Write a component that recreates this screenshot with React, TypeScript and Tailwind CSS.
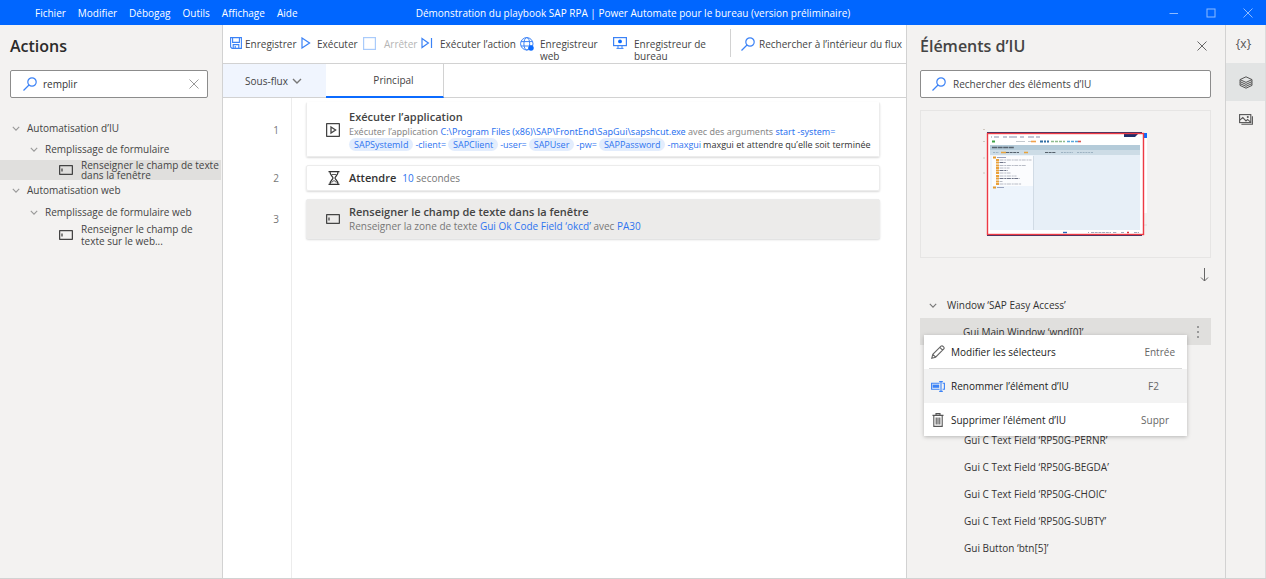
import { useState } from 'react';
import type { ReactNode } from 'react';

const menus = ['Fichier', 'Modifier', 'Débogag', 'Outils', 'Affichage', 'Aide'];

const textFields = [
  'Gui C Text Field ‘RP50G-PERNR’',
  'Gui C Text Field ‘RP50G-BEGDA’',
  'Gui C Text Field ‘RP50G-CHOIC’',
  'Gui C Text Field ‘RP50G-SUBTY’',
  'Gui Button ‘btn[5]’',
];

type IconProps = { className?: string };

function SearchIcon({ className = '' }: IconProps) {
  return (
    <svg viewBox="0 0 14 14" className={`h-3.5 w-3.5 shrink-0 ${className}`} fill="none" stroke="#3b82f6" strokeWidth="1.2">
      <circle cx="9" cy="5" r="4.2" />
      <path d="M6 8 L0.5 13.5" />
    </svg>
  );
}

function ChevronIcon({ className = '' }: IconProps) {
  return (
    <svg viewBox="0 0 10 6" className={`shrink-0 ${className}`} fill="none" stroke="currentColor" strokeWidth="1.4">
      <path d="M1 1 L5 5 L9 1" />
    </svg>
  );
}

function CloseIcon({ className = '' }: IconProps) {
  return (
    <svg viewBox="0 0 10 10" className={`h-2.5 w-2.5 shrink-0 ${className}`} fill="none" stroke="currentColor" strokeWidth="1">
      <path d="M0.5 0.5 L9.5 9.5 M9.5 0.5 L0.5 9.5" />
    </svg>
  );
}

function FieldIcon({ className = '' }: IconProps) {
  return (
    <svg viewBox="0 0 14 10" className={`h-2.5 w-3.5 shrink-0 ${className}`} fill="none" stroke="#444" strokeWidth="1.3">
      <rect x="0.6" y="0.6" width="12.8" height="8.8" rx="0.5" />
      <path d="M3 3.5 V6.5" />
    </svg>
  );
}

function SaveIcon() {
  return (
    <svg viewBox="0 0 12 12" className="h-3 w-3 shrink-0" fill="none" stroke="#3b82f6" strokeWidth="1.1">
      <path d="M0.6 0.6 H11.4 V11.4 H2 L0.6 10 Z M2.6 0.6 V5.4 H9.4 V0.6 M3.2 11.4 V7.6 H8.8 V11.4 M5.2 9 V11.4" />
    </svg>
  );
}

function PlayIcon() {
  return (
    <svg viewBox="0 0 10 12" className="h-3 w-2.5 shrink-0" fill="none" stroke="#3b82f6" strokeWidth="1.2">
      <path d="M1 1 L8.6 6 L1 11 Z" />
    </svg>
  );
}

function StopIcon() {
  return (
    <svg viewBox="0 0 13 13" className="h-[13px] w-[13px] shrink-0" fill="none" stroke="#a9cbfb" strokeWidth="1.2">
      <rect x="0.6" y="0.6" width="11.8" height="11.8" />
    </svg>
  );
}

function StepIcon() {
  return (
    <svg viewBox="0 0 12 12" className="h-3 w-3 shrink-0" fill="none" stroke="#3b82f6" strokeWidth="1.2">
      <path d="M1 1.5 L7.4 6 L1 10.5 Z M10.5 1 V11" />
    </svg>
  );
}

function GlobeIcon() {
  return (
    <svg viewBox="0 0 14 14" className="h-3.5 w-3.5 shrink-0" fill="none" stroke="#3b82f6">
      <circle cx="6.8" cy="6.8" r="6.2" />
      <ellipse cx="6.8" cy="6.8" rx="2.9" ry="6.2" />
      <path d="M1 4.6 H12.6 M1 9 H12.6" />
      <circle cx="11" cy="11" r="2.5" fill="#0b6bff" stroke="#0b6bff" strokeWidth="0.5" />
    </svg>
  );
}

function MonitorIcon() {
  return (
    <svg viewBox="0 0 14 12" className="h-3 w-3.5 shrink-0" fill="none" stroke="#3b82f6">
      <rect x="0.6" y="0.6" width="12.8" height="8" strokeWidth="1.2" />
      <circle cx="7" cy="4.4" r="1.9" fill="#0b6bff" stroke="none" />
      <path d="M5 9 V11 M9 9 V11 M3.5 11.4 H10.5" />
    </svg>
  );
}

function RunAppIcon() {
  return (
    <svg viewBox="0 0 14 14" className="h-3.5 w-3.5" fill="none" stroke="#444" strokeWidth="1.3">
      <rect x="0.6" y="0.6" width="12.8" height="12.8" rx="0.5" />
      <path d="M5 4 L9.6 7 L5 10 Z" />
    </svg>
  );
}

function HourglassIcon() {
  return (
    <svg viewBox="0 0 12 14" className="h-3.5 w-3" fill="none" stroke="#333" strokeWidth="1.2">
      <path d="M0.5 0.7 H11.5 M0.5 13.3 H11.5 M2 1 C2 4.5 5 5.5 5 7 C5 8.5 2 9.5 2 13 M10 1 C10 4.5 7 5.5 7 7 C7 8.5 10 9.5 10 13" />
      <path d="M3.5 3.5 H8.5 M3.5 11.5 L6 9.5 L8.5 11.5" strokeWidth="0.8" />
    </svg>
  );
}

function LayersIcon() {
  return (
    <svg viewBox="0 0 14 13" className="h-[13px] w-3.5" fill="none" stroke="#555" strokeWidth="1">
      <path d="M7 0.8 L13 3.6 L7 6.4 L1 3.6 Z" />
      <path d="M1 3.6 V5.6 L7 8.4 L13 5.6 V3.6 M1 5.6 V7.6 L7 10.3 L13 7.6 V5.6 M1 7.6 V9.4 L7 12.2 L13 9.4 V7.6" />
    </svg>
  );
}

function ImagesIcon() {
  return (
    <svg viewBox="0 0 14 11" className="h-[11px] w-3.5" fill="none" stroke="#555" strokeWidth="1.1">
      <rect x="0.6" y="0.6" width="11.2" height="8" />
      <path d="M2.4 10.3 H13.4 V2.2 M0.8 6.2 L3.8 3.6 L7 7 L8.6 5.4 L11.6 8.2" />
      <circle cx="8.8" cy="3" r="0.5" />
    </svg>
  );
}

function PencilIcon() {
  return (
    <svg viewBox="0 0 14 14" className="h-3.5 w-3.5" fill="none" stroke="#666" strokeWidth="1.1">
      <path d="M0.8 13.2 L1.8 9.4 L10 1.2 C11.4 0 14 2.4 12.8 4 L4.6 12.2 Z M1.8 9.4 L4.6 12.2 M8.8 2.4 L11.6 5.2" />
    </svg>
  );
}

function RenameIcon() {
  return (
    <svg viewBox="0 0 14 11" className="h-[11px] w-3.5" fill="none" stroke="#3b82f6" strokeWidth="1.1">
      <path d="M8.6 2.2 H0.6 V8.2 H8.6 M11.6 2.2 H13.4 V8.2 H11.6 M10 1 V9.8 M8.2 0.6 H11.8 M8.2 10.4 H11.8" />
      <rect x="1.6" y="3.6" width="6.6" height="3.2" fill="#3b82f6" stroke="none" />
    </svg>
  );
}

function TrashIcon() {
  return (
    <svg viewBox="0 0 12 14" className="h-3.5 w-3" fill="none" stroke="#555" strokeWidth="1.1">
      <path d="M0.5 2.4 H11.5 M4 2.2 V0.6 H8 V2.2 M1.8 2.6 V13.4 H10.2 V2.6 M4.2 4.6 V11.4 M6 4.6 V11.4 M7.8 4.6 V11.4" />
    </svg>
  );
}

// Captured SAP window shown in the preview box
function SapThumbnail() {
  const rows = [23.5, 26, 29, 31.5, 34, 36.5, 39.5, 42, 45, 47.5];
  const widths = [32, 6, 27, 10, 8, 11, 17, 20, 3, 22];
  return (
    <svg viewBox="0 0 166 112" className="h-28 w-[166px]" role="img" aria-label="SAP Easy Access">
      <path d="M1 2.5 h2 M1 14.5 h2 M1 31 h2 M1 46 h2" stroke="#cfc8c0" strokeWidth="1" />
      <rect x="161" y="6" width="4" height="80" fill="#fff" />
      <rect x="161" y="6" width="4" height="5" fill="#0b6bff" />
      <path d="M161 98 h4" stroke="#dcdcdc" />
      <rect x="5.5" y="6" width="155" height="102" fill="#fff" />
      <path d="M5 5.5 H160 M5 108.5 H160" stroke="#2b3467" strokeWidth="1.2" />
      <path d="M142 6 H157 L153 10 H142 Z" fill="#1f2f6b" />
      <path d="M9 10 h1 m2 0 h5 m4 0 h4 m2 0 h8 m3 0 h4 m4 0 h6 m2 0 h4" stroke="#8a90ad" strokeWidth="1.2" />
      <path d="M10 14.5 h3" stroke="#3fa447" strokeWidth="2" />
      <path d="M34 14.5 h9 m3 0 h3" stroke="#c3c9cf" strokeWidth="1.2" />
      <path d="M49 14.5 h5" stroke="#f1a24b" strokeWidth="1.6" />
      <path d="M58 14.5 h3 m1 0 h2 m1 0 h2" stroke="#2f6fa5" strokeWidth="1.8" />
      <path d="M69 14.5 h3 m1 0 h3 m1 0 h3 m1 0 h2" stroke="#8dbb8d" strokeWidth="1.6" />
      <path d="M85 14.5 h3 m1 0 h3 m1 0 h3" stroke="#58a7da" strokeWidth="1.6" />
      <path d="M96 14.5 h3" stroke="#d9534f" strokeWidth="1.6" />
      <rect x="8" y="18" width="150" height="5" fill="#b4cbd9" />
      <path d="M10 20.5 H32" stroke="#56616c" strokeWidth="1.6" strokeDasharray="5 0.6" />
      <rect x="8" y="23" width="150" height="5" fill="#cddce6" />
      <path d="M11 25.5 h6 m62 0 h12 m4 0 h16" stroke="#9db2c2" strokeWidth="1.2" strokeDasharray="2 0.8" />
      <path d="M19 25.5 h5 m18 0 h4" stroke="#e8a33d" strokeWidth="1.6" />
      <path d="M24 25.5 h13 m26 0 h11" stroke="#56616c" strokeWidth="1.2" strokeDasharray="3 0.6" />
      <rect x="8" y="28" width="150" height="75" fill="#e7eff7" />
      <rect x="8" y="28" width="43" height="75" fill="#edf4fc" />
      <rect x="10" y="29" width="41" height="30" fill="#fbfcfe" />
      <path d="M51.5 29 V103" stroke="#ccd6e0" strokeWidth="0.8" />
      <path d="M11 30.5 h3 M11 60.5 h3" stroke="#e59a2d" strokeWidth="2" />
      <path d="M15 30.5 h9 M15 60.5 h7" stroke="#9aa2bd" strokeWidth="1.2" />
      {rows.map((y, i) => (
        <g key={y}>
          <rect x="14" y={y + 8.5} width="3" height="2" fill="#eaa13b" />
          <path
            d={`M17.5 ${y + 9.5} h${widths[i]}`}
            stroke={i % 3 === 1 ? '#5c6378' : '#b0b4bf'}
            strokeWidth="0.9"
            strokeDasharray="4 0.8 2 0.6"
          />
        </g>
      ))}
      <path d="M81 105.5 h4" stroke="#2a68b8" strokeWidth="1.4" />
      <path d="M106 105.5 h1 m2 0 h20 m2 0 h4 m4 0 h3 m10 0 h5" stroke="#a3a8ba" strokeWidth="1" strokeDasharray="3 0.7" />
      <path d="M145 105.5 h2" stroke="#d9363e" strokeWidth="1.4" />
      <rect x="5.5" y="6.5" width="156" height="101" fill="none" stroke="#ee3a44" strokeWidth="1.4" />
    </svg>
  );
}

function ToolButton({ icon, label, className, disabled }: { icon: ReactNode; label: string; className: string; disabled?: boolean }) {
  return (
    <button
      disabled={disabled}
      className={`flex shrink-0 items-start text-left leading-3 text-[#444] disabled:text-[#b5b5b5] ${className}`}
    >
      {icon}
      <span className="pt-px">{label}</span>
    </button>
  );
}

function Variable({ children }: { children: string }) {
  return <span className="rounded-full bg-[#e3edfd] px-[5px]">{children}</span>;
}

function Step({ number, icon, className, children }: { number: number; icon: ReactNode; className: string; children: ReactNode }) {
  return (
    <li className="flex">
      <div className="flex w-[69px] shrink-0 items-center justify-end border-r border-[#ececec] pr-3 text-[#777]">{number}</div>
      <div className="min-w-0 flex-1 py-1 pr-[26px] pl-3.5">
        <div className={`flex items-center rounded-xs border border-[#ececec] shadow-[0_1px_2px_#00000026] ${className}`}>
          <span className="flex w-[42px] shrink-0 justify-end pr-[9px]">{icon}</span>
          <div className="min-w-0 flex-1">{children}</div>
        </div>
      </div>
    </li>
  );
}

function ActionsPanel() {
  const [query, setQuery] = useState('remplir');

  return (
    <aside className="w-[223px] shrink-0 border-r border-[#d2d2d2] bg-[#f3f2f1]">
      <h2 className="px-2.5 pt-[9px] text-base leading-6 font-semibold text-[#2b2b2b]">Actions</h2>
      <div className="mx-2.5 mt-3 mr-3.5 flex h-7 items-center rounded-xs border border-[#8c8c8c] bg-white pr-2 pl-3">
        <SearchIcon />
        <input
          aria-label="Rechercher des actions"
          value={query}
          onChange={(e) => setQuery(e.target.value)}
          className="ml-1.5 min-w-0 flex-1 text-[#333] outline-none"
        />
        <button aria-label="Effacer" onClick={() => setQuery('')} className="text-[#999]">
          <CloseIcon />
        </button>
      </div>
      <ul className="mt-5 text-[#444]">
        <li>
          <button className="flex h-5 items-center gap-[7px] pl-3">
            <ChevronIcon className="h-[5px] w-2 text-[#999]" />
            Automatisation d’IU
          </button>
          <button className="flex h-[22px] items-center gap-[7px] pl-[30px]">
            <ChevronIcon className="h-[5px] w-2 text-[#999]" />
            Remplissage de formulaire
          </button>
          <button className="flex h-5 w-[221px] items-center gap-2 bg-[#e0dfdd] pl-[59px] text-left leading-[10px]">
            <FieldIcon />
            <span className="whitespace-nowrap">
              Renseigner le champ de texte
              <br />
              dans la fenêtre
            </span>
          </button>
        </li>
        <li>
          <button className="flex h-5 items-center gap-[7px] pl-3">
            <ChevronIcon className="h-[5px] w-2 text-[#999]" />
            Automatisation web
          </button>
          <button className="mt-px flex h-[22px] items-center gap-[7px] pl-[30px]">
            <ChevronIcon className="h-[5px] w-2 text-[#999]" />
            Remplissage de formulaire web
          </button>
          <button className="flex items-center gap-2 pl-[59px] text-left leading-3">
            <FieldIcon />
            <span className="whitespace-nowrap">
              Renseigner le champ de
              <br />
              texte sur le web...
            </span>
          </button>
        </li>
      </ul>
    </aside>
  );
}

function Flow() {
  return (
    <main className="flex min-w-0 flex-1 flex-col bg-white">
      <div className="flex h-[39px] shrink-0 items-start border-b border-[#d2d2d2] pt-3 pl-[7px] whitespace-nowrap">
        <ToolButton className="w-[71px] gap-[3px]" icon={<SaveIcon />} label="Enregistrer" />
        <ToolButton className="w-[62px] gap-1.5" icon={<PlayIcon />} label="Exécuter" />
        <ToolButton className="w-[58px] gap-2" icon={<StopIcon />} label="Arrêter" disabled />
        <ToolButton className="w-[99px] gap-[7px]" icon={<StepIcon />} label="Exécuter l’action" />
        <ToolButton className="w-[93px] gap-1.5 pr-3 whitespace-normal" icon={<GlobeIcon />} label="Enregistreur web" />
        <ToolButton className="w-[117px] gap-[7px] pr-6 whitespace-normal" icon={<MonitorIcon />} label="Enregistreur de bureau" />
        <span className="-mt-2 h-7 w-px shrink-0 bg-[#d2d2d2]" />
        <ToolButton className="ml-2.5 gap-1" icon={<SearchIcon />} label="Rechercher à l’intérieur du flux" />
      </div>
      <div className="flex h-[34px] shrink-0 border-b border-[#d2d2d2]">
        <button className="flex w-[103px] items-center justify-center gap-1 bg-[#f0f5fe] pr-0.5 text-[#444]">
          Sous-flux
          <ChevronIcon className="h-1.5 w-2.5 text-[#777]" />
        </button>
        <button className="-mb-px w-[118px] border-r border-b-2 border-r-[#d2d2d2] border-b-[#0b6bff] pl-[18px] text-[#444]">Principal</button>
      </div>
      <ol className="flex flex-1 flex-col">
        <Step number={1} icon={<RunAppIcon />} className="h-[55px] border-t-transparent">
          <h3 className="text-[11px] leading-4 font-semibold text-[#444]">Exécuter l’application</h3>
          <p className="font-['Noto_Sans',sans-serif] text-[9px] leading-[13px] whitespace-nowrap text-[#888]">
            Exécuter l’application <span className="text-[#2e74f0]">C:\Program Files (x86)\SAP\FrontEnd\SapGui\sapshcut.exe</span> avec des
            arguments <span className="text-[#2e74f0]">start -system=</span>
          </p>
          <p className="flex gap-0.5 text-[9px] leading-[13px] whitespace-nowrap text-[#2e74f0]">
            <Variable>SAPSystemId</Variable> -client= <Variable>SAPClient</Variable> -user= <Variable>SAPUser</Variable> -pw={' '}
            <Variable>SAPPassword</Variable> -maxgui
            <span className="text-[#333]">maxgui et attendre qu’elle soit terminée</span>
          </p>
        </Step>
        <Step number={2} icon={<HourglassIcon />} className="h-[26px]">
          <div className="flex items-baseline gap-1.5">
            <h3 className="text-[11px] leading-4 font-semibold text-[#333]">Attendre</h3>
            <p className="text-[#777]">
              <span className="font-medium text-[#2e74f0]">10</span> secondes
            </p>
          </div>
        </Step>
        <Step number={3} icon={<FieldIcon />} className="h-10 bg-[#ecebea]">
          <h3 className="text-[11px] leading-[14px] font-semibold text-[#444]">Renseigner le champ de texte dans la fenêtre</h3>
          <p className="leading-[14px] text-[#777]">
            Renseigner la zone de texte <span className="font-medium text-[#2e74f0]">Gui Ok Code Field ‘okcd’</span> avec{' '}
            <span className="font-medium text-[#2e74f0]">PA30</span>
          </p>
        </Step>
        <li aria-hidden="true" className="w-[69px] flex-1 border-r border-[#ececec]" />
      </ol>
    </main>
  );
}

function ContextMenu() {
  return (
    <div role="menu" className="absolute top-[17px] left-1 z-10 w-[263px] bg-white text-[#222] shadow-[0_1px_4px_#00000040]">
      <button role="menuitem" className="flex h-[33px] w-full items-center pr-3 pl-[7px]">
        <span className="flex w-5 shrink-0"><PencilIcon /></span>
        Modifier les sélecteurs
        <kbd className="ml-auto font-[inherit] text-[#666]">Entrée</kbd>
      </button>
      <hr className="mx-[5px] border-[#d9d9d9]" />
      <button role="menuitem" className="flex h-[34px] w-full items-center bg-[#f3f3f3] pr-7 pl-[7px]">
        <span className="flex w-5 shrink-0"><RenameIcon /></span>
        Renommer l’élément d’IU
        <kbd className="ml-auto font-[inherit] text-[#666]">F2</kbd>
      </button>
      <button role="menuitem" className="flex h-[33px] w-full items-center pr-[18px] pl-2">
        <span className="flex w-[19px] shrink-0"><TrashIcon /></span>
        Supprimer l’élément d’IU
        <kbd className="ml-auto font-[inherit] text-[#666]">Suppr</kbd>
      </button>
    </div>
  );
}

function ElementsPanel() {
  return (
    <aside className="w-[320px] shrink-0 border-x border-[#d2d2d2] bg-[#f3f2f1] pr-3.5 pl-[13px]">
      <div className="flex items-center justify-between pt-[9px] pr-1">
        <h2 className="text-base leading-6 font-semibold text-[#444]">Éléments d’IU</h2>
        <button aria-label="Fermer" className="text-[#666]">
          <CloseIcon />
        </button>
      </div>
      <div className="mt-3 flex h-7 items-center rounded-xs border border-[#8c8c8c] bg-white pr-2 pl-[11px]">
        <SearchIcon />
        <input
          aria-label="Rechercher des éléments d’IU"
          placeholder="Rechercher des éléments d’IU"
          className="ml-[7px] min-w-0 flex-1 outline-none placeholder:text-[#444]"
        />
      </div>
      <div className="mt-3 flex h-[148px] items-start justify-center border border-[#e6e5e4] pt-4 pr-0.5">
        <SapThumbnail />
      </div>
      <div className="flex h-[34px] items-center justify-end pr-0.5">
        <button aria-label="Trier" className="text-[#666]">
          <svg viewBox="0 0 9 14" className="h-3.5 w-[9px]" fill="none" stroke="currentColor">
            <path d="M4.5 0 V13 M1 9.5 L4.5 13 L8 9.5" />
          </svg>
        </button>
      </div>
      <button className="flex h-[26px] items-center gap-2.5 pl-[9px] text-[#333]">
        <ChevronIcon className="h-[5px] w-2 text-[#777]" />
        Window ‘SAP Easy Access’
      </button>
      <div className="relative flex h-[27px] items-center justify-between bg-[#e0dfdd] pl-[43px] text-[#333]">
        <span>Gui Main Window ‘wnd[0]’</span>
        <button aria-label="Plus d’options" className="px-3 text-[#999]">
          <svg viewBox="0 0 2 14" className="h-3.5 w-0.5" fill="currentColor">
            <rect y="1" width="2" height="2" />
            <rect y="6" width="2" height="2" />
            <rect y="11" width="2" height="2" />
          </svg>
        </button>
        <ContextMenu />
      </div>
      <ul className="mt-[81px] pl-11 text-[#333]">
        {textFields.map((name) => (
          <li key={name} className="flex h-[27px] items-center">
            {name}
          </li>
        ))}
      </ul>
    </aside>
  );
}

export default function App() {
  return (
    <div className="flex min-h-screen flex-col border-b border-[#d2d2d2] bg-white font-['Open_Sans','Noto_Sans',sans-serif] text-[10px] leading-4">
      <header className="grid h-[25px] shrink-0 grid-cols-[1fr_auto_1fr] items-center bg-[#0066ff] text-white">
        <nav className="flex gap-3 pl-[35px] font-medium">
          {menus.map((menu) => (
            <button key={menu}>{menu}</button>
          ))}
        </nav>
        <h1>Démonstration du playbook SAP RPA | Power Automate pour le bureau (version préliminaire)</h1>
        <div className="flex items-center justify-end gap-[27px] pr-[13px] text-[#8dbbff]">
          <button aria-label="Réduire">
            <svg viewBox="0 0 10 10" className="h-2.5 w-2.5" stroke="currentColor"><path d="M0.5 5.5 H9" /></svg>
          </button>
          <button aria-label="Agrandir">
            <svg viewBox="0 0 10 10" className="h-2.5 w-2.5" fill="none" stroke="currentColor"><rect x="1" y="1" width="8" height="8" /></svg>
          </button>
          <button aria-label="Fermer la fenêtre">
            <CloseIcon />
          </button>
        </div>
      </header>
      <div className="flex flex-1">
        <ActionsPanel />
        <Flow />
        <ElementsPanel />
        <nav className="flex w-10 shrink-0 flex-col border-r border-[#dcdcdc] bg-[#f3f2f1] text-[#555]">
          <button aria-label="Variables" className="h-[38px] pr-1 text-xs">{'{x}'}</button>
          <button aria-label="Éléments d’IU" className="flex h-[38px] items-center justify-center bg-[#e2e4e4]">
            <LayersIcon />
          </button>
          <button aria-label="Images" className="flex h-9 items-center justify-center">
            <ImagesIcon />
          </button>
        </nav>
      </div>
    </div>
  );
}
